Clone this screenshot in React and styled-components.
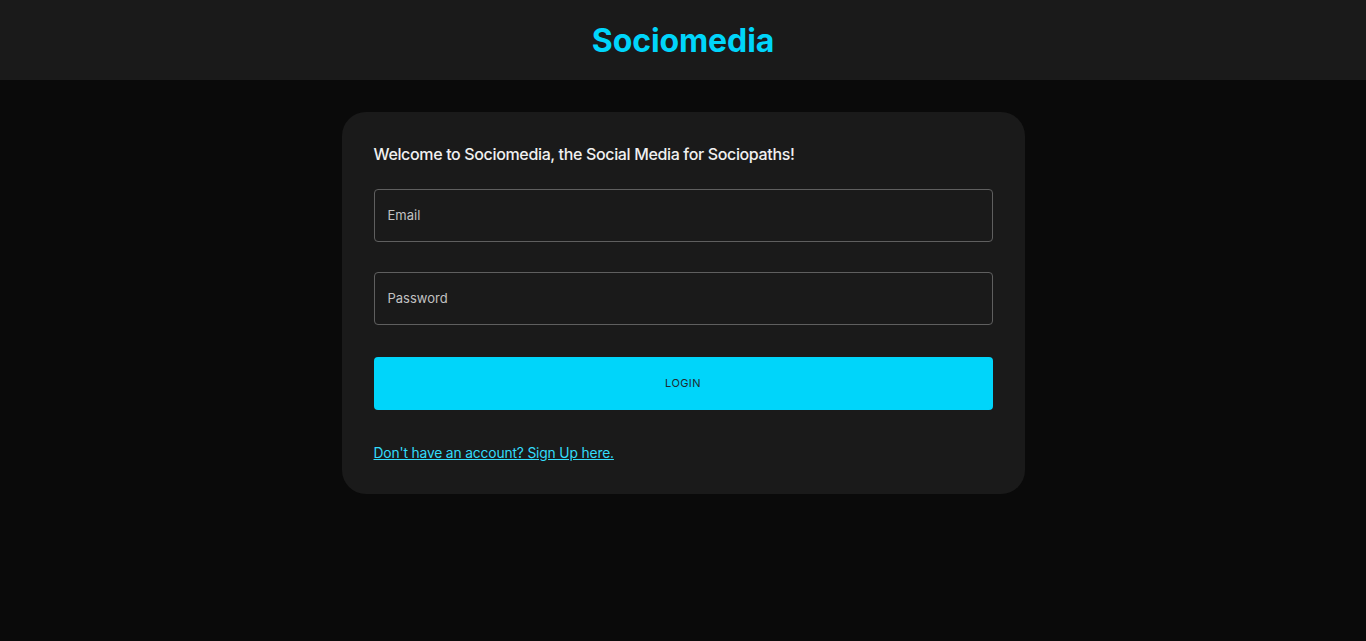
import React from 'react';
import styled, {createGlobalStyle} from 'styled-components';

const GlobalStyle = createGlobalStyle`
  body {
    margin: 0;
    background: #0a0a0a;
    font-family: Inter, "Noto Sans", sans-serif;
  }
  * { box-sizing: border-box; }
`

const Page = styled.div`
  min-height: 641px;
  background: #0a0a0a;
`

const Header = styled.header`
  height: 80px;
  background: #1a1a1a;
  display: flex;
  align-items: center;
  justify-content: center;
`

const Logo = styled.h1`
  margin: 0;
  font-size: 32px;
  font-weight: 700;
  color: #00d5fa;
  letter-spacing: -0.1px;
`

const Card = styled.div`
  width: 683px;
  margin: 32px auto;
  padding: 32px;
  border-radius: 24px;
  background: #1a1a1a;
`

const Welcome = styled.h5`
  margin: 0 0 23px;
  font-size: 16px;
  font-weight: 500;
  color: #f0f0f0;
  line-height: 1.35;
  letter-spacing: -0.35px;
`

const Form = styled.form`
  display: flex;
  flex-direction: column;
  gap: 30px;
`

const Field = styled.input`
  height: 53px;
  width: 100%;
  padding: 0 13px;
  border: 1px solid #5f5f5f;
  border-radius: 4px;
  background: transparent;
  color: #e0e0e0;
  font: inherit;
  font-size: 13px;
  outline: none;
  &::placeholder { color: #c2c2c2; }
`

const Button = styled.button`
  height: 53px;
  margin-top: 2px;
  border: none;
  border-radius: 4px;
  background: #00d5fa;
  color: #1f2a30;
  font: inherit;
  font-size: 11px;
  letter-spacing: 0.4px;
  cursor: pointer;
`

const SignUp = styled.a`
  display: inline-block;
  margin-top: 35px;
  color: #33ddfb;
  font-size: 13.8px;
  text-decoration: underline;
  letter-spacing: -0.15px;
  cursor: pointer;
`

const App = () => <Page>
    <GlobalStyle/>
    <Header>
        <Logo>Sociomedia</Logo>
    </Header>
    <Card>
        <Welcome>Welcome to Sociomedia, the Social Media for Sociopaths!</Welcome>
        <Form onSubmit={e => e.preventDefault()}>
            <Field placeholder="Email"/>
            <Field placeholder="Password" type="password"/>
            <Button type="submit">LOGIN</Button>
        </Form>
        <SignUp>Don't have an account? Sign Up here.</SignUp>
    </Card>
</Page>

export default App;
